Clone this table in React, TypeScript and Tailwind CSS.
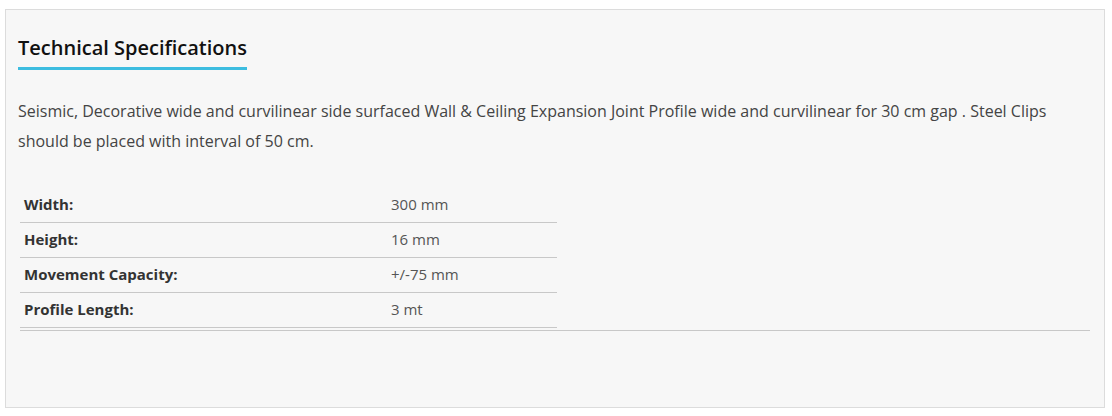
const specs = [
  { label: "Width:", value: "300 mm" },
  { label: "Height:", value: "16 mm" },
  { label: "Movement Capacity:", value: "+/-75 mm" },
  { label: "Profile Length:", value: "3 mt" },
];

export default function App() {
  return (
    <div className="w-[1112px] h-[416px] bg-white pt-[9px] pl-[5px]" style={{ fontFamily: '"Open Sans", sans-serif' }}>
      <div className="w-[1100px] h-[399px] border border-[#dcdcdc] bg-[#f7f7f7] pl-[12px] pr-[14px] pt-[24px]">
        <h2 className="inline-block text-[20px] leading-[28px] font-semibold text-[#111] pb-[5px] border-b-[3px] border-[#3dbde0]">
          Technical Specifications
        </h2>
        <p className="mt-[26px] text-[16px] leading-[30px] text-[#444]">
          Seismic, Decorative wide and curvilinear side surfaced Wall &amp; Ceiling Expansion Joint Profile wide and curvilinear for 30 cm gap . Steel Clips should be placed with interval of 50 cm.
        </p>
        <div className="mt-[31px] ml-[2px] border-b border-[#c8c8c8] pb-[2px]">
          <table className="w-[537px] border-collapse text-[15px]">
            <tbody>
              {specs.map((s) => (
                <tr key={s.label} className="border-b border-[#c8c8c8] h-[35px]">
                  <td className="pl-[4px] w-[371px] font-bold text-[#333]">{s.label}</td>
                  <td className="text-[#555]">{s.value}</td>
                </tr>
              ))}
            </tbody>
          </table>
        </div>
      </div>
    </div>
  );
}
